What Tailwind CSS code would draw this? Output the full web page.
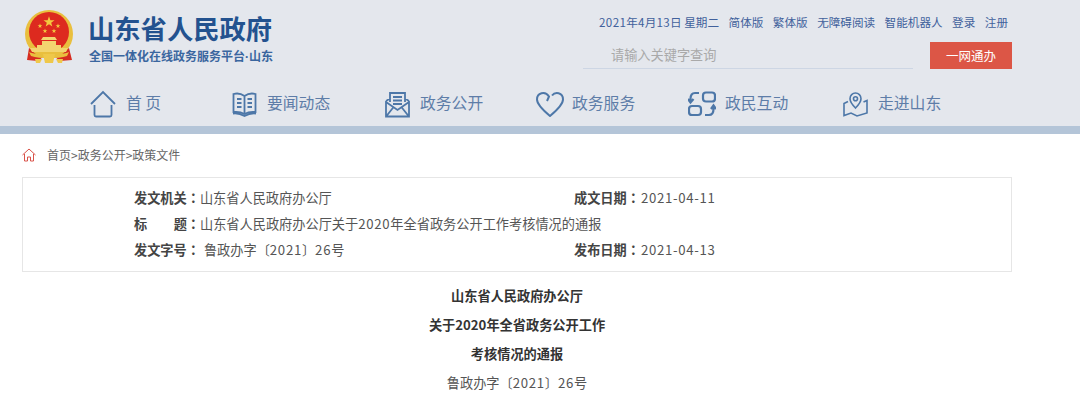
<!DOCTYPE html>
<html lang="zh-CN">
<head>
  <meta charset="UTF-8"/>
  <title>山东省人民政府</title>
  <script src="https://cdn.jsdelivr.net/npm/@tailwindcss/browser@4"></script>
</head>
<body class="bg-white overflow-hidden font-['Noto_Sans_CJK_SC','Noto_Sans',sans-serif] text-[#444]">
  <!-- Header -->
  <header class="bg-[#e4e7ed] h-[134px] border-b-[8px] border-[#b4c5d8]">
    <div class="w-[990px] ml-[22px] flex justify-between h-[82px]">
      <div class="flex pl-[2px] pt-[10px]">
        <svg class="w-[50px] h-[54px]" viewBox="0 0 50 54">
          <defs><polygon id="star" points="0,-5 1.200,-1.600 4.800,-1.500 1.900,0.600 2.900,4 0,2 -2.900,4 -1.900,0.600 -4.800,-1.500 -1.200,-1.600" fill="#f3c93f"/></defs>
          <path d="M5 38 L3 50 L14 51 L20 46 Z M45 38 L48 50 L36 51 L30 46 Z" fill="#d62b20"/>
          <circle cx="25" cy="24" r="24" fill="#e9bf3e"/>
          <circle cx="25" cy="22" r="20" fill="#dd2a1f"/>
          <use href="#star" transform="translate(25 12) scale(1.150)"/>
          <use href="#star" transform="translate(16 16) scale(.5)"/>
          <use href="#star" transform="translate(34 16) scale(.5)"/>
          <use href="#star" transform="translate(21 21) scale(.5)"/>
          <use href="#star" transform="translate(30 21) scale(.5)"/>
          <path d="M19 27 H31 L33 30 H17 Z M18 31 H32 V35 H18 Z M13 35 H37 V38 H13 Z M6 38 H44 L42 42 H8 Z" fill="#f3d56f"/>
          <path d="M5 42 C14 46 36 46 45 42 L43 46 C34 49 16 49 7 46 Z" fill="#e9bf3e"/>
          <path d="M19 44 H31 L29 53 H21 Z M11 49 H18 L16 53 H12 Z M32 49 H39 L38 53 H34 Z" fill="#efc84a"/>
        </svg>
        <div class="ml-[15px]">
          <h1 class="text-[26.3px] leading-[36px] font-bold text-[#23528f] whitespace-nowrap -ml-[1px]">山东省人民政府</h1>
          <p class="text-[12px] leading-[16px] mt-[2px] font-bold text-[#3a669f] whitespace-nowrap">全国一体化在线政务服务平台<span class="font-['Liberation_Sans']">·</span>山东</p>
        </div>
      </div>
      <div class="w-[429px] pt-[14px]">
        <div class="flex justify-end gap-[9.500px] pr-[4px] text-[11.6px] leading-[17px] text-[#41619c] whitespace-nowrap">
          <span><span class="tracking-[0.4px]">2021</span>年<span class="tracking-[0.4px]">4</span>月<span class="tracking-[0.4px]">13</span>日 星期二</span><span>简体版</span><span>繁体版</span><span>无障碍阅读</span><span>智能机器人</span><span>登录</span><span>注册</span>
        </div>
        <div class="flex justify-between mt-[11px]">
          <div class="w-[330px] h-[27px] border-b border-[#cdd6e4] pl-[28px] text-[13.2px] leading-[25px] text-[#a9a9a9]">请输入关键字查询</div>
          <button class="w-[82px] h-[27px] bg-[#dc5646] text-white text-[12.5px] leading-[27px]">一网通办</button>
        </div>
      </div>
    </div>
    <!-- Main nav -->
    <nav class="flex h-[44px] pl-[90px] text-[#5e7da8] text-[15.800px] leading-[42px] whitespace-nowrap">
      <a class="w-[142px] flex items-center">
        <svg class="w-[26px] h-[28px] mr-[10px]" viewBox="0 0 26 28" fill="none" stroke="#4d77a8" stroke-width="1.800">
          <path d="M1 14 L13 2 L25 14 M4.500 15 V25 Q4.500 26.500 6 26.500 H20 Q21.500 26.500 21.500 25 V15"/>
        </svg>
        <span class="mb-[2px]">首 页</span>
      </a>
      <a class="w-[153px] flex items-center">
        <svg class="w-[25px] h-[25px] mr-[10px]" viewBox="0 0 25 25" fill="none" stroke="#4d77a8" stroke-width="1.800">
          <path d="M12.500 4 C9 1.500 5 1 1.500 2 V20 C5 19.500 9 20 12.500 22 C16 20 20 19.500 23.500 20 V2 C20 1 16 1.500 12.500 4 Z M12.500 4 V22 M1 21.500 C5 21 9 22 12.500 24 C16 22 20 21 24 21.500"/>
          <path d="M5 7 H9.500 M5 11 H9.500 M5 15 H9.500 M15.500 7 H20 M15.500 11 H20 M15.500 15 H20"/>
        </svg>
        <span class="mb-[2px]">要闻动态</span>
      </a>
      <a class="w-[151px] flex items-center">
        <svg class="w-[25px] h-[27px] mr-[10px]" viewBox="0 0 25 27" fill="none" stroke="#4d77a8" stroke-width="1.800">
          <path d="M5 11 V2 H20 V11 M8 6 H17 M8 9.500 H17 M8 13 H17 M1 10 L5 7.500 M24 10 L20 7.500"/>
          <path d="M1 10 V25.500 H24 V10 M1 11 L12.500 19 L24 11 M1.500 25 L9 15.500 M23.500 25 L16 15.500"/>
        </svg>
        <span class="mb-[2px]">政务公开</span>
      </a>
      <a class="w-[152px] flex items-center">
        <svg class="w-[28px] h-[26px] mr-[8px]" viewBox="0 0 28 26" fill="none" stroke="#4d77a8" stroke-width="2">
          <path d="M16 4.500 C19 0.500 27 1 27 8.500 C27 13 20 20 14 25 C8 20 1 13 1 8.500 C1 2 9 -0.500 13 5.500 L11 10"/>
        </svg>
        <span class="mb-[2px]">政务服务</span>
      </a>
      <a class="w-[155px] flex items-center">
        <svg class="w-[28px] h-[26px] mr-[9px]" viewBox="0 0 28 26" fill="none" stroke="#4d77a8" stroke-width="2.200">
          <rect x="15" y="1.500" width="12" height="9" rx="3"/>
          <rect x="1" y="15" width="12" height="9" rx="3"/>
          <path d="M11 2 H7 Q2.500 2 2.500 8 V11 M0 8 L2.500 11.500 L5.500 8 M17 24 H21 Q25.500 24 25.500 18 V15 M23 18 L25.500 14.500 L28 18"/>
        </svg>
        <span class="mb-[2px]">政民互动</span>
      </a>
      <a class="flex items-center">
        <svg class="w-[25px] h-[25px] mr-[10px]" viewBox="0 0 25 25" fill="none" stroke="#4d77a8" stroke-width="1.600">
          <path d="M12.500 16 C9 12.500 7 10 7 6.800 C7 3.500 9.500 1 12.500 1 C15.500 1 18 3.500 18 6.800 C18 10 16 12.500 12.500 16 Z"/>
          <circle cx="12.500" cy="6.800" r="2"/>
          <path d="M5 9.500 L1 11.500 V23.500 L8 21 L14 24 L24 21 V8.500 L20.500 10"/>
        </svg>
        <span class="mb-[2px]">走进山东</span>
      </a>
    </nav>
  </header>

  <main class="w-[990px] ml-[22px]">
    <!-- Breadcrumb -->
    <div class="flex items-center h-[43px] pb-[2px] text-[12px] text-[#666]">
      <svg class="w-[14px] h-[14px] mr-[11px]" viewBox="0 0 14 14" fill="none" stroke="#d9534a" stroke-width="1">
        <path d="M0.500 7 L7 1 L13.500 7 M2.500 6 V13 H5.500 V9 H8.500 V13 H11.500 V6"/>
      </svg>
      <span>首页&gt;政务公开&gt;政策文件</span>
    </div>

    <!-- Document info -->
    <section class="h-[95px] border border-[#e6e6e6] pl-[111px] pt-[7px] text-[13.2px] leading-[26px] text-[#555]">
      <div class="flex">
        <p class="w-[440px]"><b class="text-[#444]">发文机关<span lang="zh-TW" class="font-['Noto_Sans_CJK_TC']">：</span></b>山东省人民政府办公厅</p>
        <p><b class="text-[#444]">成文日期<span lang="zh-TW" class="font-['Noto_Sans_CJK_TC']">：</span></b><span class="tracking-[0.7px] ml-[1px]">2021-04-11</span></p>
      </div>
      <p><b class="inline-flex justify-between w-[66px] text-[#444]"><span>标</span><span>题<span lang="zh-TW" class="font-['Noto_Sans_CJK_TC']">：</span></span></b>山东省人民政府办公厅关于<span class="tracking-[0.7px]">2020</span>年全省政务公开工作考核情况的通报</p>
      <div class="flex">
        <p class="w-[440px]"><b class="text-[#444]">发文字号<span lang="zh-TW" class="font-['Noto_Sans_CJK_TC']">：</span></b> <span class="ml-[1px]">鲁政办字〔<span class="tracking-[0.7px]">2021</span>〕<span class="tracking-[0.7px]">26</span>号</span></p>
        <p><b class="text-[#444]">发布日期<span lang="zh-TW" class="font-['Noto_Sans_CJK_TC']">：</span></b><span class="tracking-[0.7px] ml-[1px]">2021-04-13</span></p>
      </div>
    </section>

    <!-- Document title -->
    <section class="pt-[9px] text-center text-[13.2px] leading-[29px] text-[#333]">
      <p class="font-bold">山东省人民政府办公厅</p>
      <p class="font-bold">关于2020年全省政务公开工作</p>
      <p class="font-bold">考核情况的通报</p>
      <p class="text-[#555]">鲁政办字〔<span class="tracking-[0.7px]">2021</span>〕<span class="tracking-[0.7px]">26</span>号</p>
    </section>
  </main>
</body>
</html>
